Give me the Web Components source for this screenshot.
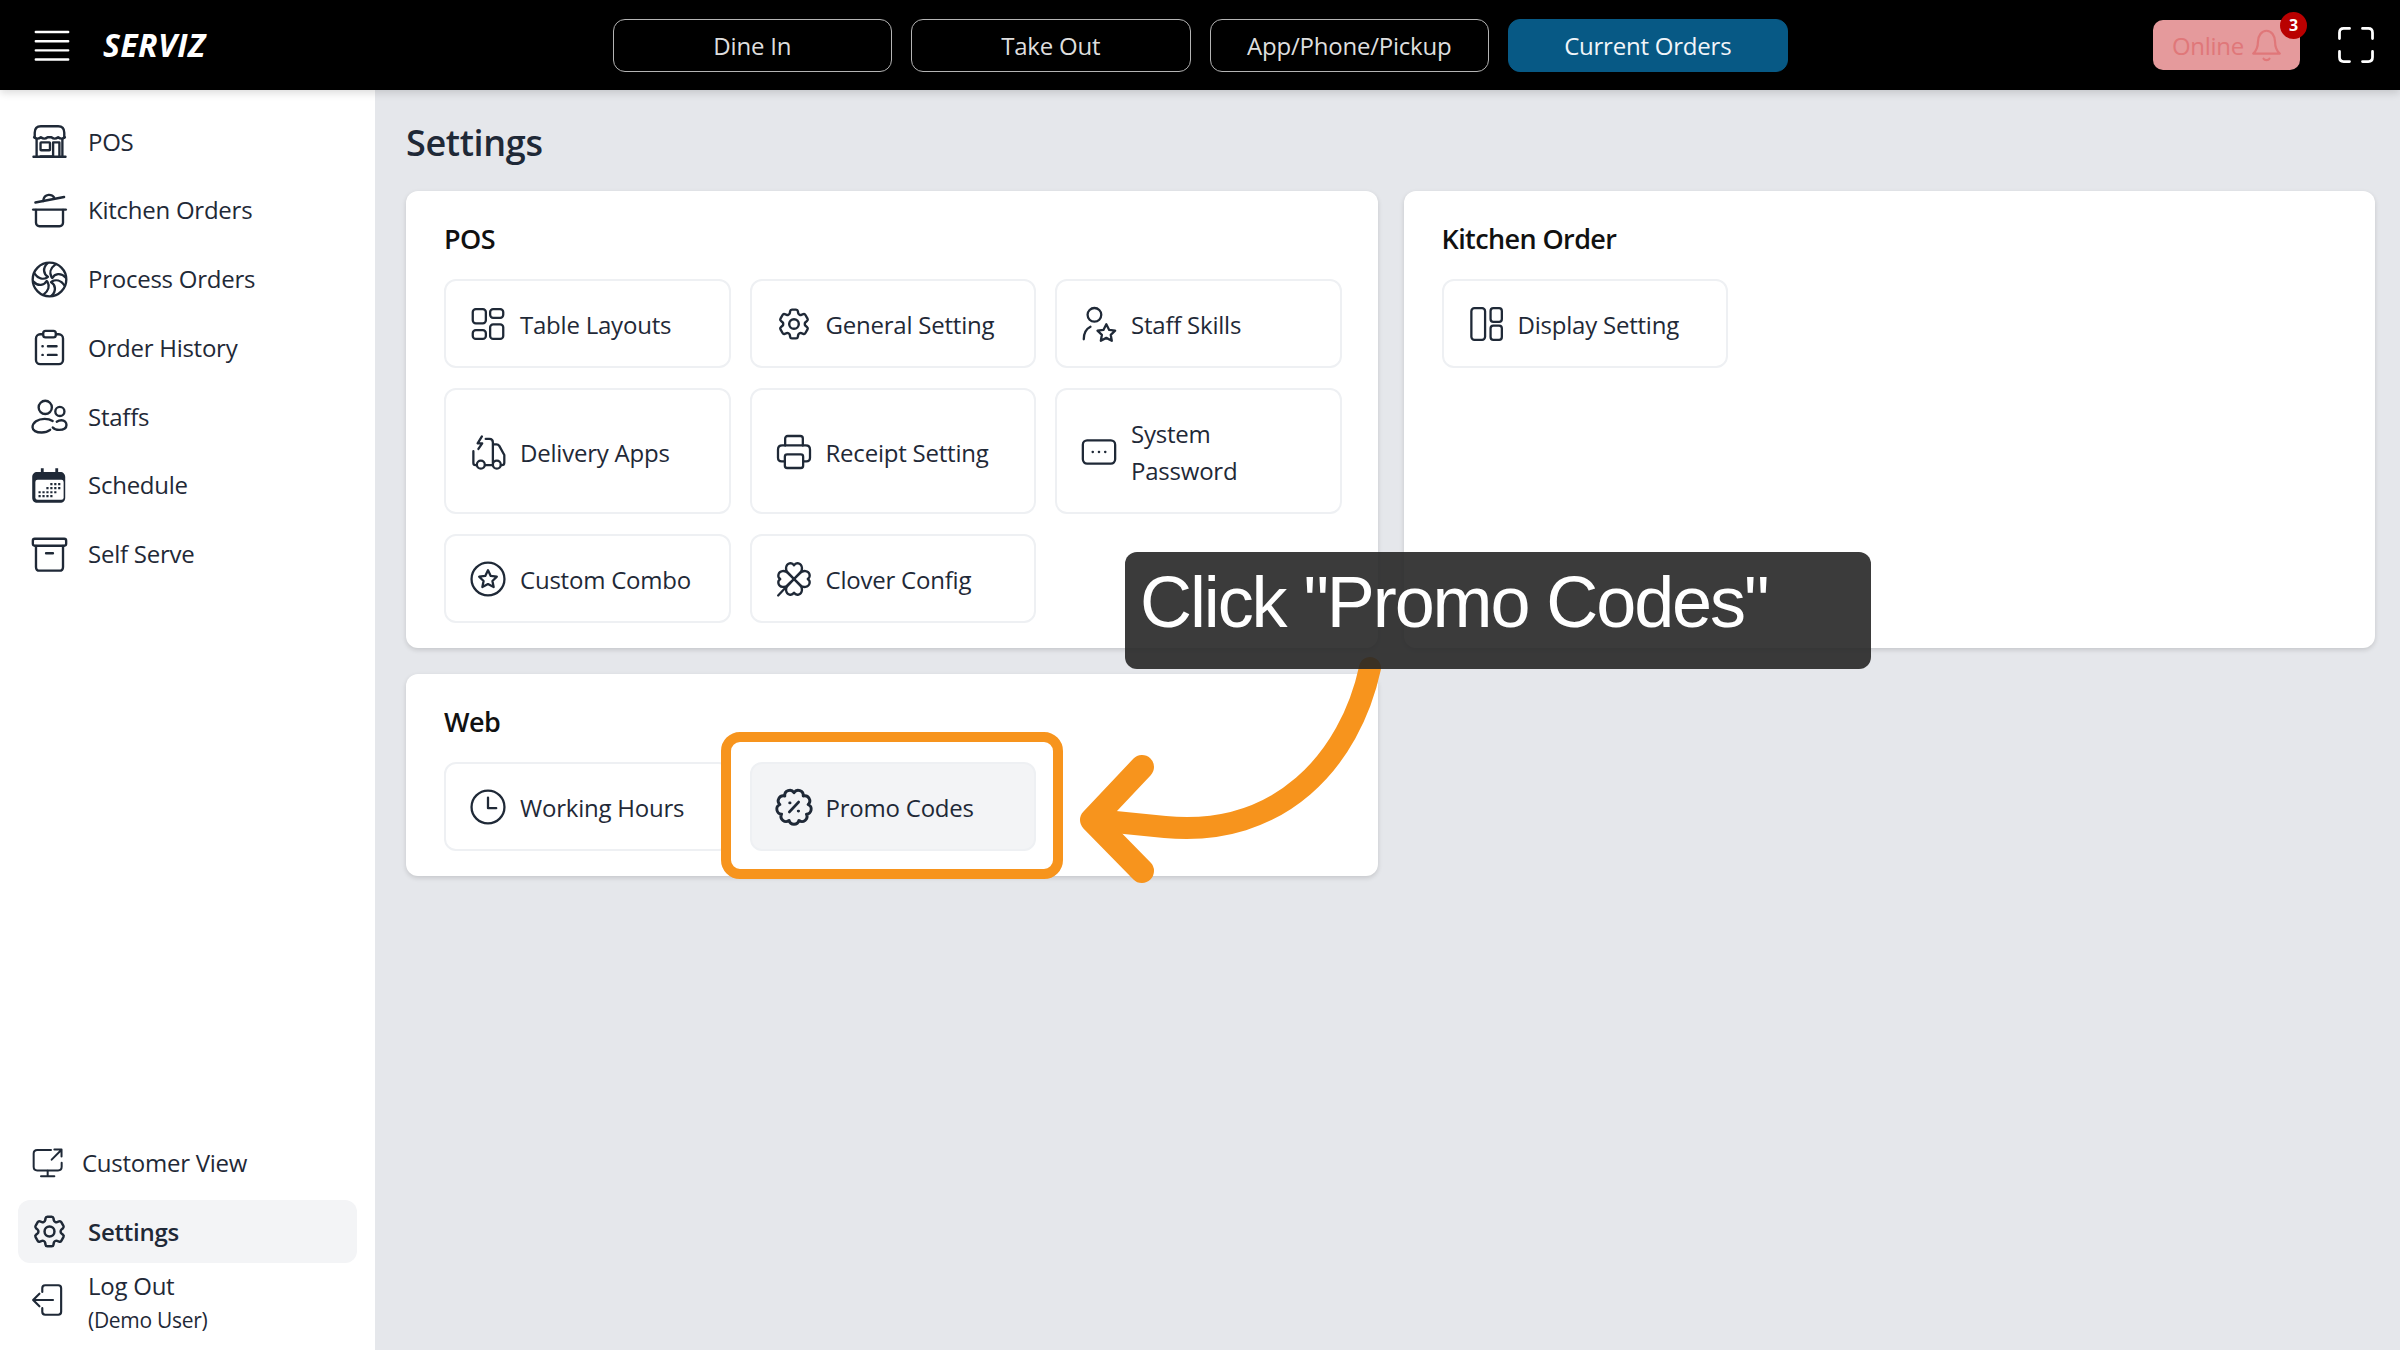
<!DOCTYPE html>
<html lang="en">
<head>
<meta charset="utf-8">
<title>Settings</title>
<style>
  html, body { margin: 0; height: 100%; overflow: hidden; }
  body { font-family: "Open Sans", "Noto Sans", sans-serif; color: #111827; background: #e5e7eb; }
</style>
</head>
<body>
<sv-app>
  <sv-topbar slot="top"></sv-topbar>
  <sv-sidebar slot="side">
    <sv-nav-item icon="store">POS</sv-nav-item>
    <sv-nav-item icon="pot">Kitchen Orders</sv-nav-item>
    <sv-nav-item icon="fan">Process Orders</sv-nav-item>
    <sv-nav-item icon="clipboard">Order History</sv-nav-item>
    <sv-nav-item icon="users">Staffs</sv-nav-item>
    <sv-nav-item icon="calendar">Schedule</sv-nav-item>
    <sv-nav-item icon="archive">Self Serve</sv-nav-item>
    <sv-nav-item slot="bottom" icon="monitor" icon-size="28" gap="21">Customer View</sv-nav-item>
    <sv-nav-item slot="bottom" icon="gear" active>Settings</sv-nav-item>
    <sv-nav-item slot="bottom" icon="logout" icon-size="30" gap="25" note="(Demo User)">Log Out</sv-nav-item>
  </sv-sidebar>
  <sv-settings>
    <sv-card heading="POS" style="grid-area: pos">
      <sv-tile icon="layouts">Table Layouts</sv-tile>
      <sv-tile icon="gear">General Setting</sv-tile>
      <sv-tile icon="userstar">Staff Skills</sv-tile>
      <sv-tile icon="truck">Delivery Apps</sv-tile>
      <sv-tile icon="printer">Receipt Setting</sv-tile>
      <sv-tile icon="password">System<br>Password</sv-tile>
      <sv-tile icon="badgestar">Custom Combo</sv-tile>
      <sv-tile icon="clover">Clover Config</sv-tile>
    </sv-card>
    <sv-card heading="Kitchen Order" style="grid-area: kitchen">
      <sv-tile icon="display">Display Setting</sv-tile>
    </sv-card>
    <sv-card heading="Web" style="grid-area: web">
      <sv-tile icon="clock">Working Hours</sv-tile>
      <sv-tile icon="discount" active>Promo Codes</sv-tile>
    </sv-card>
  </sv-settings>
  <sv-annotation slot="over" text='Click "Promo Codes"'></sv-annotation>
</sv-app>

<script>
// scalloped outline for the promo badge
const scallop = (count, radius, bump) => {
  let d = '';
  for (let i = 0; i <= count; i++) {
    const a = (i / count) * Math.PI * 2 - Math.PI / 2;
    const x = (12 + radius * Math.cos(a)).toFixed(2);
    const y = (12 + radius * Math.sin(a)).toFixed(2);
    d += i === 0 ? `M${x} ${y}` : `A${bump} ${bump} 0 0 1 ${x} ${y}`;
  }
  return d + 'Z';
};
const turn = (body, angles) => angles.map((a) => `<g transform="rotate(${a} 12 12)">${body}</g>`).join('');

// icon bodies on a 24 box, cropped to 1.5..22.5 when drawn
const ICONS = {
  menu: '<path d="M2 4h20M2 9.700h20M2 15.300h20M2 21h20"/>',
  store: '<path d="M2.600 9.500V6.500C2.600 3.800 4 2.300 6.500 2.300h11c2.500 0 3.900 1.500 3.900 4.200v3"/><path d="M2.200 9.300c1.500 1.200 2.900 1.200 4.300 0 1.500 1.200 2.900 1.200 4.300 0h2.400c1.400 1.200 2.800 1.200 4.300 0 1.400 1.200 2.800 1.200 4.300 0"/><path d="M3.800 10.500v11M20.200 10.500v11M1.800 21.700h20.400"/><rect x="6.300" y="12.600" width="6" height="5" rx=".4"/><path d="M14.300 21.500v-8.900h4v8.900M6.300 21.500h8"/>',
  pot: '<path d="M3 6.900 21.300 3.400"/><path d="M8 6c.2-2.200 1.600-3.700 3.400-3.900 1.600-.1 2.800.5 3.500 1.600"/><path d="M1.600 11.400h20.800"/><path d="M3.400 11.600v8.200c0 1.200.9 2.200 2.200 2.200h12.800c1.300 0 2.200-1 2.200-2.200v-8.200"/>',
  fan: '<circle cx="12" cy="12" r="10.700"/>' + turn('<path d="M11 10.200C8.300 8.800 7.300 4.800 10.800 1.600"/><path d="M13.300 10.500C11.800 8 12.500 4.800 15.800 2.400"/>', [0, 90, 180, 270]),
  clipboard: '<rect x="3.400" y="3.600" width="17.200" height="19" rx="2.600"/><rect x="8" y="1.400" width="8" height="4.200" rx="1.500" fill="#fff"/><path d="M7.500 11.200h.2M11 11.200h5.500M7.500 16.700h.2M11 16.700h5.500"/>',
  users: '<circle cx="9.300" cy="6.200" r="4.200"/><circle cx="18.600" cy="8.800" r="2.900"/><path d="M12.400 20.500c-1.600 1.300-3.700 1.700-5.400 1.700-3.500 0-5.800-1.300-5.800-3.300 0-3 3.300-5.400 7.700-5.400 2 0 3.800.5 5.100 1.300"/><path d="M16.600 15.300c.9-.6 2-.9 3-.9 1.900 0 3.200 1.300 3.200 3 0 2-1.800 3.100-4.700 3.100-1.800 0-3.200-.5-4-1.500"/>',
  calendar: '<path fill="currentColor" stroke="none" d="M6.500 1h1.800v2.400h7.400V1h1.800v2.400h1.300c1.900 0 3.200 1.300 3.200 3.200v13.200c0 1.900-1.300 3.200-3.200 3.200H4.200C2.300 23 1 21.700 1 19.800V6.600c0-1.900 1.300-3.200 3.200-3.200h2.300z"/><rect x="3" y="8.400" width="18" height="12.600" rx="1.400" fill="#fff" stroke="none"/><path fill="currentColor" stroke="none" d="M12.500 10.400h1.400v1.400h-1.400zM15 10.400h1.400v1.400H15zM17.500 10.400h1.400v1.400h-1.400zM10 13h1.400v1.400H10zM12.500 13h1.400v1.400h-1.400zM15 13h1.400v1.400H15zM17.500 13h1.400v1.400h-1.400zM5 15.600h1.400V17H5zM7.500 15.600h1.400V17H7.500zM10 15.600h1.400V17H10zM12.500 15.600h1.400V17h-1.400zM15 15.600h1.400V17H15zM5 18h1.400v1.400H5zM7.500 18h1.400v1.400H7.500zM10 18h1.400v1.400H10zM12.500 18h1.400v1.400h-1.400z"/>',
  archive: '<rect x="1.400" y="2" width="21.200" height="4.400" rx="1.200"/><path d="M3.400 6.500v13.400c0 1.500 1 2.400 2.400 2.400h12.400c1.400 0 2.400-.9 2.400-2.400V6.500M9.800 11.200h4.400"/>',
  monitor: '<path d="M15 2.200H4.700C3 2.200 2 3.200 2 4.900v10c0 1.700 1 2.700 2.700 2.700h15.600c1.700 0 2.700-1 2.700-2.700v-3"/><path d="M12.500 17.800v4M7.500 22h10M15.500 9.500 22.700 2.200M17.500 1.800h5.400v5.400"/>',
  gear: '<path d="M9.594 3.940c.09-.542.56-.94 1.110-.94h2.593c.55 0 1.020.398 1.110.94l.213 1.281c.063.374.313.686.645.870.074.040.147.083.22.127.324.196.72.257 1.075.124l1.217-.456a1.125 1.125 0 011.370.49l1.296 2.247a1.125 1.125 0 01-.26 1.431l-1.003.827c-.293.24-.438.613-.431.992a6.759 6.759 0 010 .255c-.007.378.138.75.43.99l1.005.828c.424.35.534.954.26 1.430l-1.298 2.247a1.125 1.125 0 01-1.369.491l-1.217-.456c-.355-.133-.75-.072-1.076.124a6.570 6.570 0 01-.22.128c-.331.183-.581.495-.644.869l-.213 1.280c-.09.543-.56.941-1.110.941h-2.594c-.55 0-1.020-.398-1.110-.94l-.213-1.281c-.062-.374-.312-.686-.644-.870a6.520 6.520 0 01-.22-.127c-.325-.196-.72-.257-1.076-.124l-1.217.456a1.125 1.125 0 01-1.369-.49l-1.297-2.247a1.125 1.125 0 01.26-1.431l1.004-.827c.292-.24.437-.613.43-.992a6.932 6.932 0 010-.255c.007-.378-.138-.75-.43-.99l-1.004-.828a1.125 1.125 0 01-.26-1.430l1.297-2.247a1.125 1.125 0 011.370-.491l1.216.456c.356.133.751.072 1.076-.124.072-.044.146-.087.22-.128.332-.183.582-.495.644-.869l.214-1.281z"/><circle cx="12" cy="12" r="3"/>',
  logout: '<path d="M8 6.400V3.700c0-1.200.8-2 2-2h9.200c1.200 0 2 .8 2 2v16.600c0 1.200-.8 2-2 2H10c-1.200 0-2-.8-2-2v-2.600"/><path d="M15.500 12H1.800M6 7.600 1.600 12 6 16.400"/>',
  layouts: '<rect x="2" y="2.200" width="8.600" height="9.400" rx="2"/><rect x="13.400" y="2.200" width="8.600" height="5.800" rx="2"/><rect x="2" y="16" width="8.600" height="5.800" rx="2"/><rect x="13.400" y="12.200" width="8.600" height="9.600" rx="2"/>',
  userstar: '<circle cx="9" cy="6" r="4.500"/><path d="M2 22c0-4 1.600-6.800 4.400-8.200"/><path d="m16.800 12.200 1.900 3.700 3.900.5-2.900 2.700.7 3.900-3.600-1.900-3.600 1.900.7-3.900-2.900-2.700 3.900-.5z"/>',
  truck: '<path d="M8 1.800 5.200 6.300h3L5.700 10"/><path d="M2.400 11.500v7.700c0 .9.500 1.400 1.400 1.400h.8M10 20.600h5.200M15.200 19.500V5.700c0-1.400-1-2.300-2.300-2.300h-2.400"/><path d="M15.400 7h2.200c.8 0 1.400.4 1.800 1l3.300 6v5c0 1-.6 1.600-1.600 1.600h-.7"/><circle cx="7.300" cy="20.300" r="2.600"/><circle cx="17.800" cy="20.300" r="2.600"/>',
  printer: '<path d="M6.200 7.800V3.200c0-1 .6-1.700 1.700-1.700h8.200c1.100 0 1.700.7 1.700 1.700v4.600"/><path d="M6 18.200H3.900c-1.500 0-2.400-.9-2.400-2.400v-5.300c0-1.700 1.100-2.800 2.800-2.800h15.400c1.700 0 2.800 1.100 2.800 2.800v5.300c0 1.500-.9 2.400-2.400 2.400H18"/><rect x="6" y="13.600" width="12" height="8.900" rx="1.500"/>',
  password: '<rect x="1.400" y="4.400" width="21.200" height="15.200" rx="2.800"/><path d="M7.800 12h.2M11.900 12h.2M16 12h.2"/>',
  badgestar: '<circle cx="12" cy="12" r="10.800"/><path d="m12 6.300 1.800 3.700 4 .5-2.900 2.800.8 4-3.700-2-3.700 2 .8-4-2.900-2.800 4-.5z"/>',
  clover: turn('<path d="M12 12 8 8C6 6 6.500 2.500 9 1.800c1.500-.4 2.500.4 3 1.200.5-.8 1.500-1.600 3-1.200C17.500 2.500 18 6 16 8z"/>', [0, 90, 180, 270]) + '<path d="M9.500 14.500 1.600 22.800"/>',
  clock: '<circle cx="12" cy="12" r="10.800"/><path d="M12 5.800v7h5.400"/>',
  discount: `<path stroke-width="1.900" d="${scallop(9, 9.400, 3.300)}"/><path d="M15 8.800 9 15.200M9.200 9.300h.2M14.800 14.700h.2" stroke-width="1.900"/>`,
  display: '<rect x="2.400" y="1.600" width="9" height="20.800" rx="2"/><rect x="15" y="1.600" width="7.400" height="9" rx="1.800"/><rect x="15" y="13" width="7.400" height="9.400" rx="1.800"/>',
  bell: '<path d="M6.200 9.500C6.200 5.400 8.700 2 12 2s5.800 3.400 5.800 7.500c0 4.700 1.300 6.300 3.200 8H3c1.900-1.700 3.200-3.300 3.200-8z"/><path d="M10 21c.7 1.200 3.300 1.200 4 0"/>',
  expand: '<path d="M1.800 8V4.400c0-1.600 1-2.600 2.600-2.600H8M16 1.800h3.600c1.600 0 2.600 1 2.600 2.600V8M22.200 16v3.600c0 1.600-1 2.600-2.600 2.600H16M8 22.200H4.400c-1.600 0-2.600-1-2.600-2.600V16"/>'
};
const VIEWBOX = {gear: '2 2 20 20'};

class SvIcon extends HTMLElement {
  connectedCallback () {
    const size = this.getAttribute('size') || 32;
    const weight = this.getAttribute('weight') || 1.5;
    const name = this.getAttribute('name');
    this.attachShadow({mode: 'open'}).innerHTML = `
      <style>:host { display: inline-flex; flex: none; line-height: 0; } svg { display: block; overflow: visible; }</style>
      <svg width="${size}" height="${size}" viewBox="${VIEWBOX[name] || '1.5 1.5 21 21'}" fill="none" stroke="currentColor"
        stroke-width="${weight}" stroke-linecap="round" stroke-linejoin="round">${ICONS[name] || ''}</svg>`;
  }
}

const appTemplate = document.createElement('template');
appTemplate.innerHTML = `
  <style>
  :host { display: grid; grid-template-columns: 375px 1fr; grid-template-rows: 90px 1fr; height: 100vh; position: relative; }
  ::slotted([slot="top"]) { grid-column: 1 / 3; }
  </style>
  <slot name="top"></slot>
  <slot name="side"></slot>
  <slot></slot>
  <slot name="over"></slot>
`;
class SvApp extends HTMLElement {
  constructor () {
    super();
    this.attachShadow({mode: 'open'}).appendChild(appTemplate.content.cloneNode(true));
  }
}

const topbarTemplate = document.createElement('template');
topbarTemplate.innerHTML = `
  <style>
  :host {
    display: grid; grid-template-columns: 1fr auto 1fr; align-items: center; height: 90px;
    background: #000; color: #fff; position: relative; z-index: 2; box-shadow: 0 3px 8px rgba(0,0,0,.14);
  }
  .brand { display: flex; align-items: center; gap: 34px; padding-left: 35px; }
  .logo { font-size: 32px; font-weight: 700; font-style: italic; letter-spacing: .4px; line-height: 1; }
  nav { display: flex; gap: 19px; }
  button {
    width: 279.5px; height: 53px; box-sizing: border-box; border: 1.5px solid #b4b4b4; border-radius: 12px;
    background: #000; color: #dedede; font: 400 24px "Open Sans", sans-serif; letter-spacing: -.22px; padding: 0;
  }
  button.on { background: #075985; border-color: #075985; color: #f1f5f9; }
  .right { display: flex; align-items: center; justify-content: flex-end; gap: 39px; padding-right: 27px; }
  .online {
    position: relative; display: flex; align-items: center; gap: 7px; height: 50px; width: 147px; box-sizing: border-box;
    padding-left: 19px; background: #e59a9c; border-radius: 10px; color: #e07779; font-size: 24px; letter-spacing: -.3px;
  }
  .badge {
    position: absolute; top: -8px; right: -7px; width: 27px; height: 27px; border-radius: 50%;
    background: #b90000; color: #fff; font-size: 16px; font-weight: 700; line-height: 27px; text-align: center; letter-spacing: 0;
  }
  </style>
  <div class="brand">
    <sv-icon name="menu" size="34"></sv-icon>
    <span class="logo">SERVIZ</span>
  </div>
  <nav>
    <button>Dine In</button>
    <button>Take Out</button>
    <button>App/Phone/Pickup</button>
    <button class="on">Current Orders</button>
  </nav>
  <div class="right">
    <div class="online">Online <sv-icon name="bell" size="31"></sv-icon><span class="badge">3</span></div>
    <sv-icon name="expand" size="34" weight="1.700"></sv-icon>
  </div>
`;
class SvTopbar extends HTMLElement {
  constructor () {
    super();
    this.attachShadow({mode: 'open'}).appendChild(topbarTemplate.content.cloneNode(true));
  }
}

const sidebarTemplate = document.createElement('template');
sidebarTemplate.innerHTML = `
  <style>
  :host {
    display: flex; flex-direction: column; justify-content: space-between; box-sizing: border-box;
    background: #fff; padding: 20px 18px 13px; height: 1260px;
  }
  .group { display: flex; flex-direction: column; gap: 5.8px; }
  </style>
  <div class="group"><slot></slot></div>
  <div class="group"><slot name="bottom"></slot></div>
`;
class SvSidebar extends HTMLElement {
  constructor () {
    super();
    this.attachShadow({mode: 'open'}).appendChild(sidebarTemplate.content.cloneNode(true));
  }
}

class SvNavItem extends HTMLElement {
  connectedCallback () {
    const note = this.getAttribute('note');
    const size = this.getAttribute('icon-size') || 33;
    const gap = this.getAttribute('gap') || 22;
    this.attachShadow({mode: 'open'}).innerHTML = `
      <style>
      :host {
        display: flex; align-items: center; gap: ${gap}px; min-height: 63px; box-sizing: border-box;
        padding-left: 15px; border-radius: 12px; font-size: 24px; letter-spacing: -.25px; color: #1f2937;
      }
      :host([active]) { background: #f3f4f6; font-weight: 600; }
      :host([note]) sv-icon { margin-bottom: 6px; }
      .label { display: flex; flex-direction: column; line-height: 34px; }
      small { font-size: 21px; letter-spacing: -.3px; }
      </style>
      <sv-icon name="${this.getAttribute('icon')}" size="${size}"></sv-icon>
      <span class="label"><span><slot></slot></span>${note ? `<small>${note}</small>` : ''}</span>`;
  }
}

const settingsTemplate = document.createElement('template');
settingsTemplate.innerHTML = `
  <style>
  :host { display: block; padding: 0 25px 0 31px; }
  h1 { margin: 0; height: 101px; font-size: 36px; font-weight: 600; line-height: 106px; color: #1f2937; letter-spacing: -.35px; }
  .grid {
    display: grid; gap: 26px; grid-template-columns: 1fr 1fr;
    grid-template-areas: "pos kitchen" "web ."; align-items: stretch;
  }
  </style>
  <h1>Settings</h1>
  <div class="grid"><slot></slot></div>
`;
class SvSettings extends HTMLElement {
  constructor () {
    super();
    this.attachShadow({mode: 'open'}).appendChild(settingsTemplate.content.cloneNode(true));
  }
}

class SvCard extends HTMLElement {
  connectedCallback () {
    this.attachShadow({mode: 'open'}).innerHTML = `
      <style>
      :host {
        display: block; background: #fff; border-radius: 12px; padding: 26px 36px 25px 38px;
        box-shadow: 0 2px 5px rgba(0,0,0,.14);
      }
      h2 { margin: 0 0 20px; font-size: 27px; font-weight: 600; line-height: 43px; color: #111; letter-spacing: -.6px; }
      .tiles { display: grid; grid-template-columns: repeat(3, 1fr); gap: 20px 19px; margin-top: -1px; }
      </style>
      <h2>${this.getAttribute('heading')}</h2>
      <div class="tiles"><slot></slot></div>`;
  }
}

class SvTile extends HTMLElement {
  connectedCallback () {
    this.attachShadow({mode: 'open'}).innerHTML = `
      <style>
      :host {
        display: flex; align-items: center; gap: 16px; box-sizing: border-box; padding: 25px 26px 23px;
        border: 2px solid #eef0f3; border-radius: 12px; background: #fff;
        font-size: 24px; line-height: 37px; letter-spacing: -.22px; color: #1f2937;
      }
      :host([active]) { background: #f3f4f6; }
      sv-icon { margin-top: -1px; }
      </style>
      <sv-icon name="${this.getAttribute('icon')}" size="32"></sv-icon>
      <span><slot></slot></span>`;
  }
}

const annotationTemplate = document.createElement('template');
annotationTemplate.innerHTML = `
  <style>
  :host { position: absolute; inset: 0; pointer-events: none; z-index: 3; }
  svg { position: absolute; inset: 0; }
  .callout {
    position: absolute; left: 1125px; top: 552px; width: 746px; height: 117px; box-sizing: border-box; padding-left: 15px;
    border-radius: 12px; background: rgba(38,38,38,.9); color: #fff;
    font: 400 72px/100px "Liberation Sans", Arial, sans-serif; letter-spacing: -2.100px; white-space: nowrap;
  }
  </style>
  <svg width="2400" height="1350" viewBox="0 0 2400 1350" fill="none" stroke="#f7941d" stroke-linecap="round" stroke-linejoin="round">
    <rect x="726" y="737" width="332" height="137" rx="14" stroke-width="10"/>
    <path d="M1370 668C1350 760 1280 838 1165 827L1095 820" stroke-width="22"/>
    <path d="M1142 767 1092 820 1142 871" stroke-width="24"/>
  </svg>
  <div class="callout"></div>
`;
class SvAnnotation extends HTMLElement {
  constructor () {
    super();
    this.attachShadow({mode: 'open'}).appendChild(annotationTemplate.content.cloneNode(true));
  }
  connectedCallback () {
    this.shadowRoot.querySelector('.callout').textContent = this.getAttribute('text');
  }
}

customElements.define('sv-icon', SvIcon);
customElements.define('sv-app', SvApp);
customElements.define('sv-topbar', SvTopbar);
customElements.define('sv-sidebar', SvSidebar);
customElements.define('sv-nav-item', SvNavItem);
customElements.define('sv-settings', SvSettings);
customElements.define('sv-card', SvCard);
customElements.define('sv-tile', SvTile);
customElements.define('sv-annotation', SvAnnotation);
</script>
</body>
</html>
